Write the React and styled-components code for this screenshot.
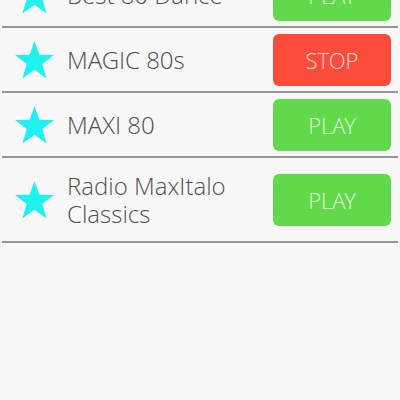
import React from 'react';
import styled, { createGlobalStyle } from 'styled-components';

const GlobalStyle = createGlobalStyle`
  html, body {
    margin: 0;
    padding: 0;
    background: #f8f8f8;
    overflow: hidden;
  }
  body {
    font-family: "Open Sans Light", "Open Sans", "Liberation Sans", sans-serif;
  }
`;

const Page = styled.div`
  width: 400px;
  height: 400px;
  overflow: hidden;
  background: #f8f8f8;
`;

const List = styled.ul`
  list-style: none;
  margin: -37px 2px 0;
  padding: 0;
`;

const Row = styled.li`
  display: flex;
  align-items: center;
  padding: 6px 7px 5px 12px;
  border-bottom: 2px solid #979797;
  min-height: 52px;
`;

const Star = styled.svg`
  flex: 0 0 41px;
  width: 41px;
  height: 41px;
  margin-right: 12px;
`;

const Name = styled.div`
  flex: 1;
  margin: 8px 0;
  font-size: 24px;
  font-weight: 300;
  line-height: 28px;
  color: #4f4f4f;
`;

const PlayButton = styled.button`
  flex: 0 0 118px;
  width: 118px;
  height: 52px;
  margin-left: 8px;
  border: none;
  border-radius: 6px;
  background: ${props => (props.$playing ? '#fb4c3c' : '#62d94b')};
  color: rgba(255, 255, 255, 0.8);
  font-family: "Open Sans Light", "Open Sans", "Liberation Sans", sans-serif;
  font-size: 22px;
  font-weight: 300;
  padding: 0;
`;

const StarIcon = () => (
  <Star viewBox="0 0 40 40">
    <polygon
      points="20,1 24.8,14.4 39,14.6 27.6,23.3 31.8,37.5 20,29 8.2,37.5 12.4,23.3 1,14.6 15.2,14.4"
      fill="#1ff0f0"
    />
  </Star>
);

const stations = [
  { name: 'Best 80 Dance', playing: false },
  { name: 'MAGIC 80s', playing: true },
  { name: 'MAXI 80', playing: false },
  { name: 'Radio MaxItalo Classics', playing: false },
];

const App = () => (
  <Page>
    <GlobalStyle />
    <List>
      {stations.map(item => (
        <Row key={item.name}>
          <StarIcon />
          <Name>{item.name}</Name>
          <PlayButton $playing={item.playing}>{item.playing ? 'STOP' : 'PLAY'}</PlayButton>
        </Row>
      ))}
    </List>
  </Page>
);

export default App;
